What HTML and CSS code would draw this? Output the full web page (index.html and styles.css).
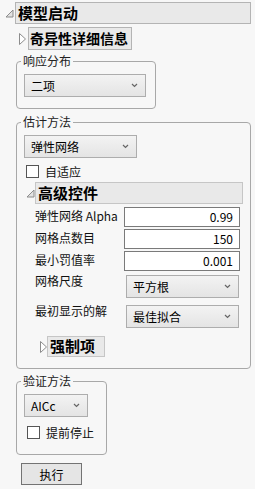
FILE: index.html
```html
<!DOCTYPE html>
<html lang="zh">
<head>
    <meta charset="UTF-8">
    <title>模型启动</title>
    <link rel="stylesheet" href="styles.css">
</head>
<body>

    <div class="hrow top">
        <svg class="tri" width="9" height="9"><polygon points="1,8 8,1 8,8" fill="#e2e2e2" stroke="#8c8c8c"/></svg>
        <div class="hbar main">模型启动</div>
    </div>

    <div class="hrow sub">
        <svg class="tri" width="7" height="12"><polygon points="0.5,0.5 6.5,6 0.5,11.5" fill="#fff" stroke="#8c8c8c"/></svg>
        <div class="hbar details">奇异性详细信息</div>
    </div>

    <div class="group g1">
        <div class="legend">响应分布</div>
        <div class="select sel-dist">
            <span>二项</span>
            <svg width="7" height="5"><polyline points="1,1 3.5,3.5 6,1" fill="none" stroke="#666" stroke-width="1.2"/></svg>
        </div>
    </div>

    <div class="group g2">
        <div class="legend">估计方法</div>
        <div class="select sel-method">
            <span>弹性网络</span>
            <svg width="7" height="5"><polyline points="1,1 3.5,3.5 6,1" fill="none" stroke="#666" stroke-width="1.2"/></svg>
        </div>
        <div class="check">
            <span class="box"></span>
            <span>自适应</span>
        </div>

        <div class="adv">
            <svg class="tri" width="9" height="9"><polygon points="1,8 8,1 8,8" fill="#e2e2e2" stroke="#8c8c8c"/></svg>
            <div class="hbar adv-bar">高级控件</div>
        </div>

        <div class="fields">
            <div class="frow first">
                <span class="flabel">弹性网络 Alpha</span>
                <div class="input">0.99</div>
            </div>
            <div class="frow">
                <span class="flabel">网格点数目</span>
                <div class="input">150</div>
            </div>
            <div class="frow">
                <span class="flabel">最小罚值率</span>
                <div class="input">0.001</div>
            </div>
            <div class="frow sel">
                <span class="flabel">网格尺度</span>
                <div class="select sel-row">
                    <span>平方根</span>
                    <svg width="7" height="5"><polyline points="1,1 3.5,3.5 6,1" fill="none" stroke="#666" stroke-width="1.2"/></svg>
                </div>
            </div>
            <div class="frow sel last">
                <span class="flabel">最初显示的解</span>
                <div class="select sel-row">
                    <span>最佳拟合</span>
                    <svg width="7" height="5"><polyline points="1,1 3.5,3.5 6,1" fill="none" stroke="#666" stroke-width="1.2"/></svg>
                </div>
            </div>
        </div>

        <div class="hrow forced">
            <svg class="tri" width="7" height="12"><polygon points="0.5,0.5 6.5,6 0.5,11.5" fill="#fff" stroke="#8c8c8c"/></svg>
            <div class="hbar forced-bar">强制项</div>
        </div>
    </div>

    <div class="group g3">
        <div class="legend">验证方法</div>
        <div class="select sel-valid">
            <span>AICc</span>
            <svg width="7" height="5"><polyline points="1,1 3.5,3.5 6,1" fill="none" stroke="#666" stroke-width="1.2"/></svg>
        </div>
        <div class="check">
            <span class="box"></span>
            <span>提前停止</span>
        </div>
    </div>

    <button class="run" type="button">执行</button>

</body>
</html>
```
FILE: styles.css
```css
body {
    margin: 0;
    padding-top: 2px;
    width: 255px;
    background-color: #f7f7f7;
    font-family: "Noto Sans CJK SC", "Noto Sans", sans-serif;
    font-size: 12px;
    color: #111111;
}
.hrow {
    display: flex;
    align-items: center;
}
.hrow.top {
    height: 22px;
    margin-left: 5px;
}
.hrow.top .tri {
    margin-right: 1px;
}
.hrow.sub {
    height: 23px;
    margin-top: 3px;
    margin-left: 19px;
}
.hrow.sub .tri {
    margin-right: 2px;
}
.hbar {
    box-sizing: border-box;
    background-color: #e9e9e9;
    border: 1px solid #b4b4b4;
    font-size: 15px;
    font-weight: bold;
    color: #000000;
    padding-left: 2px;
    white-space: nowrap;
    overflow: hidden;
}
.hbar.main {
    width: 236px;
    height: 22px;
    line-height: 19px;
}
.hbar.details {
    width: 104px;
    height: 23px;
    line-height: 20px;
    font-size: 14px;
    padding-left: 1px;
}
.group {
    display: flex;
    flex-direction: column;
    align-items: flex-start;
    box-sizing: border-box;
    margin-left: 16px;
    border: 1px solid #a8a8a8;
    border-radius: 4px;
    padding: 0 7px 11px 7px;
}
.g1 {
    width: 140px;
    margin-top: 11px;
}
.g2 {
    width: 235px;
    margin-top: 13px;
}
.g3 {
    width: 91px;
    margin-top: 12px;
    padding-bottom: 15px;
}
.legend {
    height: 14px;
    line-height: 14px;
    margin: -8px 0 0 -3px;
    padding: 0 2px;
    background-color: #f7f7f7;
    color: #222222;
}
.select {
    display: flex;
    align-items: center;
    justify-content: space-between;
    box-sizing: border-box;
    height: 23px;
    margin-top: 6px;
    padding: 0 7px 0 6px;
    border: 1px solid #adadad;
    background: linear-gradient(#f3f3f3, #e4e4e4);
    color: #000000;
}
.sel-dist {
    width: 122px;
}
.sel-method {
    width: 113px;
}
.sel-valid {
    width: 64px;
}
.sel-row {
    width: 113px;
    margin-top: 0;
    margin-left: 2px;
}
.check {
    display: flex;
    align-items: center;
    gap: 6px;
    height: 14px;
    margin-top: 6px;
    margin-left: 2px;
}
.g3 .check {
    margin-top: 8px;
    margin-left: 3px;
}
.box {
    width: 13px;
    height: 13px;
    box-sizing: border-box;
    border: 1px solid #555555;
    background-color: #ffffff;
}
.adv {
    display: flex;
    align-items: center;
    align-self: stretch;
    height: 22px;
    margin-top: 4px;
    padding-left: 2px;
}
.adv-bar {
    flex: 1;
    height: 22px;
    line-height: 19px;
    border-color: #c6c6c6;
}
.fields {
    display: flex;
    flex-direction: column;
    gap: 2px;
    margin-top: 3px;
    margin-left: 11px;
}
.frow {
    display: flex;
    align-items: flex-start;
}
.frow.sel {
    margin-top: 2px;
}
.frow.last {
    margin-top: 5px;
}
.flabel {
    width: 89px;
    line-height: 16px;
    padding-top: 1px;
    white-space: nowrap;
}
.frow.sel .flabel {
    padding-top: 0;
    margin-top: -2px;
}
.input {
    box-sizing: border-box;
    width: 116px;
    height: 20px;
    line-height: 18px;
    padding-right: 6px;
    text-align: right;
    border: 1px solid #7a7a7a;
    background-color: #ffffff;
    color: #000000;
}
.hrow.forced {
    height: 21px;
    margin-top: 8px;
    margin-left: 16px;
}
.forced-bar {
    width: 58px;
    height: 21px;
    line-height: 18px;
    border-color: #c6c6c6;
}
.run {
    display: block;
    box-sizing: border-box;
    width: 61px;
    height: 22px;
    margin: 8px 0 0 21px;
    padding: 0;
    border: 1px solid #737373;
    border-radius: 0;
    background-color: #e5e5e5;
    font-family: "Noto Sans CJK SC", "Noto Sans", sans-serif;
    font-size: 12px;
    color: #000000;
}
```
